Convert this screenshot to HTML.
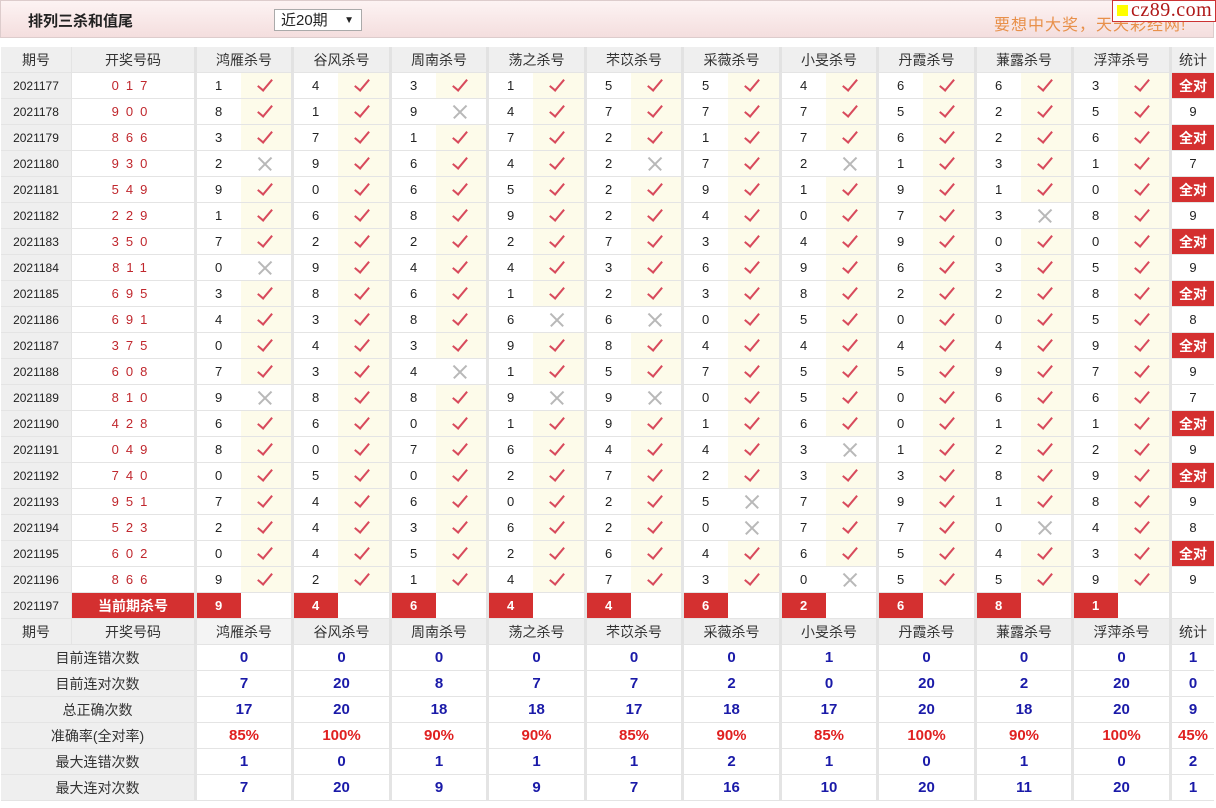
<!DOCTYPE html>
<html><head><meta charset="utf-8"><style>
body{margin:0;background:#fff;font-family:"Liberation Sans","Noto Sans CJK SC",sans-serif;width:1216px;height:808px;overflow:hidden;position:relative}
.top{position:absolute;left:0;top:0;width:1212px;height:36px;border:1px solid #dcc;background:linear-gradient(#fdf3f3,#f4dede)}
.ttl{position:absolute;left:27px;top:9px;font-size:15px;font-weight:bold;color:#222}
.sel{position:absolute;left:273px;top:8px;width:88px;height:22px;border:1px solid #aaa;background:#fff;font-size:15px;line-height:21px;padding-left:6px;box-sizing:border-box;color:#222}
.sel span{position:absolute;right:7px;top:0;font-size:10px}
.ad{position:absolute;left:993px;top:10px;font-size:16px;color:#e8904a;letter-spacing:1px}
.logo{position:absolute;left:1112px;top:0;width:104px;height:22px;background:#fff;border:1px solid #c33;box-sizing:border-box;font-family:"Liberation Serif",serif;font-size:20px;color:#b01818;line-height:19px;padding-left:18px;letter-spacing:0.5px}
.logo i{position:absolute;left:4px;top:4px;width:11px;height:11px;background:#ff0}
table{position:absolute;left:1px;top:47px;border-collapse:separate;border-spacing:0;table-layout:fixed;width:1213px}
td{height:25px;border-bottom:1px solid #e4e4e4;padding:0;font-size:13px;color:#222;text-align:center;white-space:nowrap;overflow:hidden}
td.n{text-align:left;padding-left:18px;border-left:3px solid #e4e4e4}
td.p{background:#efefef;font-size:12px}
td.o{color:#c0272d;letter-spacing:7px;border-left:1px solid #e4e4e4}
td.k{background:#fdfbea;position:relative}
td.k::after{content:"";position:absolute;left:20px;top:3px;width:6px;height:13px;border-right:2px solid #d84a5c;border-bottom:2px solid #d84a5c;transform:rotate(40deg)}
td.x{position:relative}
td.x::before,td.x::after{content:"";position:absolute;left:15px;top:12px;width:18px;height:1.5px;background:#b8b8b8;transform:rotate(45deg)}
td.x::after{transform:rotate(-45deg)}
td.s{border-left:3px solid #e4e4e4}
td.q{background:#d43030;color:#fff;font-weight:bold;font-size:14px}
tr.h td{background:#efefef;font-size:14px;color:#333}
tr.h td.gh{border-left:3px solid #e2e2e2}
td.c{background:#d43030;color:#fff;font-weight:bold;font-size:13px;text-align:left;padding-left:18px;border-left:3px solid #e4e4e4}
td.cr{background:#fff}
tr.t td.l{background:#efefef;font-size:14px;color:#333}
tr.t td.v{color:#1a1aa8;font-weight:bold;font-size:15px;border-left:3px solid #e4e4e4}
tr.t td.r{color:#e02020}
</style></head><body>
<div class="top"><div class="ttl">排列三杀和值尾</div><div class="sel">近20期<span>▼</span></div><div class="ad">要想中大奖，天天彩经网!</div></div>
<div class="logo"><i></i>cz89.com</div>
<table>
<colgroup><col style="width:70px"><col style="width:123px"><col style="width:47px"><col style="width:50px"><col style="width:47px"><col style="width:51px"><col style="width:47px"><col style="width:50px"><col style="width:47px"><col style="width:51px"><col style="width:47px"><col style="width:50px"><col style="width:47px"><col style="width:51px"><col style="width:47px"><col style="width:50px"><col style="width:47px"><col style="width:51px"><col style="width:47px"><col style="width:50px"><col style="width:47px"><col style="width:51px"><col style="width:45px"></colgroup>
<tr class="h"><td>期号</td><td style="border-left:1px solid #e4e4e4">开奖号码</td><td class="gh" colspan="2">鸿雁杀号</td><td class="gh" colspan="2">谷风杀号</td><td class="gh" colspan="2">周南杀号</td><td class="gh" colspan="2">荡之杀号</td><td class="gh" colspan="2">芣苡杀号</td><td class="gh" colspan="2">采薇杀号</td><td class="gh" colspan="2">小旻杀号</td><td class="gh" colspan="2">丹霞杀号</td><td class="gh" colspan="2">蒹露杀号</td><td class="gh" colspan="2">浮萍杀号</td><td class="gh">统计</td></tr>
<tr><td class="p">2021177</td><td class="o">017</td><td class="n">1</td><td class="k"></td><td class="n">4</td><td class="k"></td><td class="n">3</td><td class="k"></td><td class="n">1</td><td class="k"></td><td class="n">5</td><td class="k"></td><td class="n">5</td><td class="k"></td><td class="n">4</td><td class="k"></td><td class="n">6</td><td class="k"></td><td class="n">6</td><td class="k"></td><td class="n">3</td><td class="k"></td><td class="s q">全对</td></tr>
<tr><td class="p">2021178</td><td class="o">900</td><td class="n">8</td><td class="k"></td><td class="n">1</td><td class="k"></td><td class="n">9</td><td class="x"></td><td class="n">4</td><td class="k"></td><td class="n">7</td><td class="k"></td><td class="n">7</td><td class="k"></td><td class="n">7</td><td class="k"></td><td class="n">5</td><td class="k"></td><td class="n">2</td><td class="k"></td><td class="n">5</td><td class="k"></td><td class="s">9</td></tr>
<tr><td class="p">2021179</td><td class="o">866</td><td class="n">3</td><td class="k"></td><td class="n">7</td><td class="k"></td><td class="n">1</td><td class="k"></td><td class="n">7</td><td class="k"></td><td class="n">2</td><td class="k"></td><td class="n">1</td><td class="k"></td><td class="n">7</td><td class="k"></td><td class="n">6</td><td class="k"></td><td class="n">2</td><td class="k"></td><td class="n">6</td><td class="k"></td><td class="s q">全对</td></tr>
<tr><td class="p">2021180</td><td class="o">930</td><td class="n">2</td><td class="x"></td><td class="n">9</td><td class="k"></td><td class="n">6</td><td class="k"></td><td class="n">4</td><td class="k"></td><td class="n">2</td><td class="x"></td><td class="n">7</td><td class="k"></td><td class="n">2</td><td class="x"></td><td class="n">1</td><td class="k"></td><td class="n">3</td><td class="k"></td><td class="n">1</td><td class="k"></td><td class="s">7</td></tr>
<tr><td class="p">2021181</td><td class="o">549</td><td class="n">9</td><td class="k"></td><td class="n">0</td><td class="k"></td><td class="n">6</td><td class="k"></td><td class="n">5</td><td class="k"></td><td class="n">2</td><td class="k"></td><td class="n">9</td><td class="k"></td><td class="n">1</td><td class="k"></td><td class="n">9</td><td class="k"></td><td class="n">1</td><td class="k"></td><td class="n">0</td><td class="k"></td><td class="s q">全对</td></tr>
<tr><td class="p">2021182</td><td class="o">229</td><td class="n">1</td><td class="k"></td><td class="n">6</td><td class="k"></td><td class="n">8</td><td class="k"></td><td class="n">9</td><td class="k"></td><td class="n">2</td><td class="k"></td><td class="n">4</td><td class="k"></td><td class="n">0</td><td class="k"></td><td class="n">7</td><td class="k"></td><td class="n">3</td><td class="x"></td><td class="n">8</td><td class="k"></td><td class="s">9</td></tr>
<tr><td class="p">2021183</td><td class="o">350</td><td class="n">7</td><td class="k"></td><td class="n">2</td><td class="k"></td><td class="n">2</td><td class="k"></td><td class="n">2</td><td class="k"></td><td class="n">7</td><td class="k"></td><td class="n">3</td><td class="k"></td><td class="n">4</td><td class="k"></td><td class="n">9</td><td class="k"></td><td class="n">0</td><td class="k"></td><td class="n">0</td><td class="k"></td><td class="s q">全对</td></tr>
<tr><td class="p">2021184</td><td class="o">811</td><td class="n">0</td><td class="x"></td><td class="n">9</td><td class="k"></td><td class="n">4</td><td class="k"></td><td class="n">4</td><td class="k"></td><td class="n">3</td><td class="k"></td><td class="n">6</td><td class="k"></td><td class="n">9</td><td class="k"></td><td class="n">6</td><td class="k"></td><td class="n">3</td><td class="k"></td><td class="n">5</td><td class="k"></td><td class="s">9</td></tr>
<tr><td class="p">2021185</td><td class="o">695</td><td class="n">3</td><td class="k"></td><td class="n">8</td><td class="k"></td><td class="n">6</td><td class="k"></td><td class="n">1</td><td class="k"></td><td class="n">2</td><td class="k"></td><td class="n">3</td><td class="k"></td><td class="n">8</td><td class="k"></td><td class="n">2</td><td class="k"></td><td class="n">2</td><td class="k"></td><td class="n">8</td><td class="k"></td><td class="s q">全对</td></tr>
<tr><td class="p">2021186</td><td class="o">691</td><td class="n">4</td><td class="k"></td><td class="n">3</td><td class="k"></td><td class="n">8</td><td class="k"></td><td class="n">6</td><td class="x"></td><td class="n">6</td><td class="x"></td><td class="n">0</td><td class="k"></td><td class="n">5</td><td class="k"></td><td class="n">0</td><td class="k"></td><td class="n">0</td><td class="k"></td><td class="n">5</td><td class="k"></td><td class="s">8</td></tr>
<tr><td class="p">2021187</td><td class="o">375</td><td class="n">0</td><td class="k"></td><td class="n">4</td><td class="k"></td><td class="n">3</td><td class="k"></td><td class="n">9</td><td class="k"></td><td class="n">8</td><td class="k"></td><td class="n">4</td><td class="k"></td><td class="n">4</td><td class="k"></td><td class="n">4</td><td class="k"></td><td class="n">4</td><td class="k"></td><td class="n">9</td><td class="k"></td><td class="s q">全对</td></tr>
<tr><td class="p">2021188</td><td class="o">608</td><td class="n">7</td><td class="k"></td><td class="n">3</td><td class="k"></td><td class="n">4</td><td class="x"></td><td class="n">1</td><td class="k"></td><td class="n">5</td><td class="k"></td><td class="n">7</td><td class="k"></td><td class="n">5</td><td class="k"></td><td class="n">5</td><td class="k"></td><td class="n">9</td><td class="k"></td><td class="n">7</td><td class="k"></td><td class="s">9</td></tr>
<tr><td class="p">2021189</td><td class="o">810</td><td class="n">9</td><td class="x"></td><td class="n">8</td><td class="k"></td><td class="n">8</td><td class="k"></td><td class="n">9</td><td class="x"></td><td class="n">9</td><td class="x"></td><td class="n">0</td><td class="k"></td><td class="n">5</td><td class="k"></td><td class="n">0</td><td class="k"></td><td class="n">6</td><td class="k"></td><td class="n">6</td><td class="k"></td><td class="s">7</td></tr>
<tr><td class="p">2021190</td><td class="o">428</td><td class="n">6</td><td class="k"></td><td class="n">6</td><td class="k"></td><td class="n">0</td><td class="k"></td><td class="n">1</td><td class="k"></td><td class="n">9</td><td class="k"></td><td class="n">1</td><td class="k"></td><td class="n">6</td><td class="k"></td><td class="n">0</td><td class="k"></td><td class="n">1</td><td class="k"></td><td class="n">1</td><td class="k"></td><td class="s q">全对</td></tr>
<tr><td class="p">2021191</td><td class="o">049</td><td class="n">8</td><td class="k"></td><td class="n">0</td><td class="k"></td><td class="n">7</td><td class="k"></td><td class="n">6</td><td class="k"></td><td class="n">4</td><td class="k"></td><td class="n">4</td><td class="k"></td><td class="n">3</td><td class="x"></td><td class="n">1</td><td class="k"></td><td class="n">2</td><td class="k"></td><td class="n">2</td><td class="k"></td><td class="s">9</td></tr>
<tr><td class="p">2021192</td><td class="o">740</td><td class="n">0</td><td class="k"></td><td class="n">5</td><td class="k"></td><td class="n">0</td><td class="k"></td><td class="n">2</td><td class="k"></td><td class="n">7</td><td class="k"></td><td class="n">2</td><td class="k"></td><td class="n">3</td><td class="k"></td><td class="n">3</td><td class="k"></td><td class="n">8</td><td class="k"></td><td class="n">9</td><td class="k"></td><td class="s q">全对</td></tr>
<tr><td class="p">2021193</td><td class="o">951</td><td class="n">7</td><td class="k"></td><td class="n">4</td><td class="k"></td><td class="n">6</td><td class="k"></td><td class="n">0</td><td class="k"></td><td class="n">2</td><td class="k"></td><td class="n">5</td><td class="x"></td><td class="n">7</td><td class="k"></td><td class="n">9</td><td class="k"></td><td class="n">1</td><td class="k"></td><td class="n">8</td><td class="k"></td><td class="s">9</td></tr>
<tr><td class="p">2021194</td><td class="o">523</td><td class="n">2</td><td class="k"></td><td class="n">4</td><td class="k"></td><td class="n">3</td><td class="k"></td><td class="n">6</td><td class="k"></td><td class="n">2</td><td class="k"></td><td class="n">0</td><td class="x"></td><td class="n">7</td><td class="k"></td><td class="n">7</td><td class="k"></td><td class="n">0</td><td class="x"></td><td class="n">4</td><td class="k"></td><td class="s">8</td></tr>
<tr><td class="p">2021195</td><td class="o">602</td><td class="n">0</td><td class="k"></td><td class="n">4</td><td class="k"></td><td class="n">5</td><td class="k"></td><td class="n">2</td><td class="k"></td><td class="n">6</td><td class="k"></td><td class="n">4</td><td class="k"></td><td class="n">6</td><td class="k"></td><td class="n">5</td><td class="k"></td><td class="n">4</td><td class="k"></td><td class="n">3</td><td class="k"></td><td class="s q">全对</td></tr>
<tr><td class="p">2021196</td><td class="o">866</td><td class="n">9</td><td class="k"></td><td class="n">2</td><td class="k"></td><td class="n">1</td><td class="k"></td><td class="n">4</td><td class="k"></td><td class="n">7</td><td class="k"></td><td class="n">3</td><td class="k"></td><td class="n">0</td><td class="x"></td><td class="n">5</td><td class="k"></td><td class="n">5</td><td class="k"></td><td class="n">9</td><td class="k"></td><td class="s">9</td></tr>
<tr><td class="p">2021197</td><td class="q" style="border-left:1px solid #e4e4e4">当前期杀号</td><td class="c">9</td><td class="cr"></td><td class="c">4</td><td class="cr"></td><td class="c">6</td><td class="cr"></td><td class="c">4</td><td class="cr"></td><td class="c">4</td><td class="cr"></td><td class="c">6</td><td class="cr"></td><td class="c">2</td><td class="cr"></td><td class="c">6</td><td class="cr"></td><td class="c">8</td><td class="cr"></td><td class="c">1</td><td class="cr"></td><td class="s"></td></tr>
<tr class="h"><td>期号</td><td style="border-left:1px solid #e4e4e4">开奖号码</td><td class="gh" colspan="2" style="background:#f4f4f4">鸿雁杀号</td><td class="gh" colspan="2">谷风杀号</td><td class="gh" colspan="2">周南杀号</td><td class="gh" colspan="2">荡之杀号</td><td class="gh" colspan="2">芣苡杀号</td><td class="gh" colspan="2">采薇杀号</td><td class="gh" colspan="2">小旻杀号</td><td class="gh" colspan="2">丹霞杀号</td><td class="gh" colspan="2">蒹露杀号</td><td class="gh" colspan="2">浮萍杀号</td><td class="gh">统计</td></tr>
<tr class="t"><td class="l" colspan="2">目前连错次数</td><td class="v" colspan="2">0</td><td class="v" colspan="2">0</td><td class="v" colspan="2">0</td><td class="v" colspan="2">0</td><td class="v" colspan="2">0</td><td class="v" colspan="2">0</td><td class="v" colspan="2">1</td><td class="v" colspan="2">0</td><td class="v" colspan="2">0</td><td class="v" colspan="2">0</td><td class="v">1</td></tr>
<tr class="t"><td class="l" colspan="2">目前连对次数</td><td class="v" colspan="2">7</td><td class="v" colspan="2">20</td><td class="v" colspan="2">8</td><td class="v" colspan="2">7</td><td class="v" colspan="2">7</td><td class="v" colspan="2">2</td><td class="v" colspan="2">0</td><td class="v" colspan="2">20</td><td class="v" colspan="2">2</td><td class="v" colspan="2">20</td><td class="v">0</td></tr>
<tr class="t"><td class="l" colspan="2">总正确次数</td><td class="v" colspan="2">17</td><td class="v" colspan="2">20</td><td class="v" colspan="2">18</td><td class="v" colspan="2">18</td><td class="v" colspan="2">17</td><td class="v" colspan="2">18</td><td class="v" colspan="2">17</td><td class="v" colspan="2">20</td><td class="v" colspan="2">18</td><td class="v" colspan="2">20</td><td class="v">9</td></tr>
<tr class="t"><td class="l" colspan="2">准确率(全对率)</td><td class="v r" colspan="2">85%</td><td class="v r" colspan="2">100%</td><td class="v r" colspan="2">90%</td><td class="v r" colspan="2">90%</td><td class="v r" colspan="2">85%</td><td class="v r" colspan="2">90%</td><td class="v r" colspan="2">85%</td><td class="v r" colspan="2">100%</td><td class="v r" colspan="2">90%</td><td class="v r" colspan="2">100%</td><td class="v r">45%</td></tr>
<tr class="t"><td class="l" colspan="2">最大连错次数</td><td class="v" colspan="2">1</td><td class="v" colspan="2">0</td><td class="v" colspan="2">1</td><td class="v" colspan="2">1</td><td class="v" colspan="2">1</td><td class="v" colspan="2">2</td><td class="v" colspan="2">1</td><td class="v" colspan="2">0</td><td class="v" colspan="2">1</td><td class="v" colspan="2">0</td><td class="v">2</td></tr>
<tr class="t"><td class="l" colspan="2">最大连对次数</td><td class="v" colspan="2">7</td><td class="v" colspan="2">20</td><td class="v" colspan="2">9</td><td class="v" colspan="2">9</td><td class="v" colspan="2">7</td><td class="v" colspan="2">16</td><td class="v" colspan="2">10</td><td class="v" colspan="2">20</td><td class="v" colspan="2">11</td><td class="v" colspan="2">20</td><td class="v">1</td></tr>
</table>
</body></html>
